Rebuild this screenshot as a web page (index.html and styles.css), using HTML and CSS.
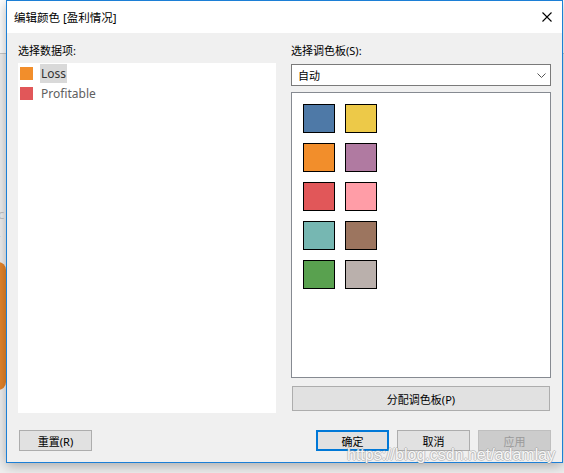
FILE: index.html
```html
<!DOCTYPE html>
<html>
	<head>
		<title>编辑颜色</title>
		<link rel="stylesheet" href="styles.css">
	</head>
	<body>
		<div class="desk">
			<div class="desk-top"></div>
			<div class="desk-text">rc<br>4</div>
			<div class="desk-shape"></div>

			<div class="dialog">
				<div class="titlebar">
					<span class="title">编辑颜色 [盈利情况]</span>
					<svg class="close" width="10" height="10" viewBox="0 0 10 10">
						<path d="M0.5 0.5 L9.5 9.5 M9.5 0.5 L0.5 9.5" stroke="#000" stroke-width="1.1" fill="none"/>
					</svg>
				</div>

				<div class="dialog-body">
					<div class="columns">
						<div class="col">
							<div class="label">选择数据项:</div>
							<ul class="items">
								<li class="item"><span class="chip orange"></span><span class="item-name selected">Loss</span></li>
								<li class="item"><span class="chip red"></span><span class="item-name">Profitable</span></li>
							</ul>
						</div>

						<div class="col">
							<div class="label">选择调色板(S):</div>
							<div class="select">
								<span>自动</span>
								<svg width="9" height="5" viewBox="0 0 9 5">
									<path d="M0.5 0.5 L4.5 4.5 L8.5 0.5" stroke="#555" stroke-width="1" fill="none"/>
								</svg>
							</div>
							<div class="palette">
								<span class="swatch blue"></span>
								<span class="swatch yellow"></span>
								<span class="swatch orange"></span>
								<span class="swatch purple"></span>
								<span class="swatch red"></span>
								<span class="swatch pink"></span>
								<span class="swatch teal"></span>
								<span class="swatch brown"></span>
								<span class="swatch green"></span>
								<span class="swatch grey"></span>
							</div>
							<button class="btn wide">分配调色板(P)</button>
						</div>
					</div>

					<div class="footer">
						<button class="btn reset">重置(R)</button>
						<div class="actions">
							<button class="btn default">确定</button>
							<button class="btn">取消</button>
							<button class="btn" disabled>应用</button>
						</div>
					</div>
				</div>
			</div>

			<div class="watermark">https://blog.csdn.net/adamlay</div>
		</div>
	</body>
</html>
```

FILE: styles.css
```css
body {
	margin: 0;
	background: #f0f0f0;
	font-family: "Noto Sans", "Noto Sans CJK SC", sans-serif;
}

.desk {
	position: relative;
	width: 564px;
	height: 473px;
	overflow: hidden;
}
.desk-top {
	height: 53px;
	background: #fff;
	border-bottom: 1px solid #c8c8c8;
}
.desk-text {
	position: absolute;
	left: -7px;
	top: 204px;
	font-size: 13px;
	line-height: 20px;
	color: #c4c4c4;
}
.desk-shape {
	position: absolute;
	left: -40px;
	top: 262px;
	width: 46px;
	height: 128px;
	background: #e5852a;
	border-radius: 8px;
}

/* the window itself */
.dialog {
	position: absolute;
	left: 6px;
	top: 0;
	width: 555px;
	height: 461px;
	border: 1px solid #1c7fd6;
	background: #f0f0f0;
	box-shadow: 0 3px 12px rgba(0, 0, 0, 0.3);
	display: flex;
	flex-direction: column;
}
.titlebar {
	height: 32px;
	background: #fff;
	display: flex;
	align-items: center;
	justify-content: space-between;
	padding: 0 10px 0 7px;
}
.title {
	font-size: 11.5px;
	color: #000;
}

.dialog-body {
	flex: 1;
	padding: 10px 11px 11px;
	display: flex;
	flex-direction: column;
}
.columns {
	display: grid;
	grid-template-columns: 258px 260px;
	column-gap: 15px;
}
.label {
	height: 20px;
	line-height: 16px;
	font-size: 11px;
	color: #000;
}

/* data items */
.items {
	list-style: none;
	margin: 0;
	padding: 0 0 0 2px;
	height: 350px;
	background: #fff;
	box-sizing: border-box;
}
.item {
	height: 20px;
	display: flex;
	align-items: center;
	gap: 7px;
	font-size: 12px;
}
.chip {
	width: 13px;
	height: 13px;
}
.item-name {
	line-height: 19px;
	padding: 0 1px;
	color: #606060;
}
.item-name.selected {
	background: #d9d9d9;
	color: #333;
}

/* palette picker */
.select {
	margin-top: 1px;
	height: 22px;
	box-sizing: border-box;
	border: 1px solid #7a7a7a;
	background: #fff;
	display: flex;
	align-items: center;
	justify-content: space-between;
	padding: 0 4px 0 6px;
	font-size: 11px;
}
.palette {
	margin-top: 6px;
	height: 286px;
	box-sizing: border-box;
	border: 1px solid #868a91;
	background: #fff;
	padding: 11px;
	display: grid;
	grid-template-columns: 32px 32px;
	grid-auto-rows: 29px;
	gap: 10px;
	align-content: start;
}
.swatch {
	box-sizing: border-box;
	border: 1px solid #000;
}

.blue { background: #4e79a7; }
.yellow { background: #edc948; }
.orange { background: #f28e2b; }
.purple { background: #b07aa1; }
.red { background: #e15759; }
.pink { background: #ff9da7; }
.teal { background: #76b7b2; }
.brown { background: #9c755f; }
.green { background: #59a14f; }
.grey { background: #bab0ac; }

/* buttons */
.btn {
	font-family: "Noto Sans", "Noto Sans CJK SC", sans-serif;
	font-size: 11px;
	color: #000;
	background: #e1e1e1;
	border: 1px solid #adadad;
	width: 73px;
	height: 21px;
	padding: 0;
	box-sizing: border-box;
}
.btn.wide {
	height: 25px;
	margin: 8px 1px 0;
	display: block;
	width: 258px;
}
.btn.default {
	border: 2px solid #0078d7;
}
.btn:disabled {
	background: #cccccc;
	border-color: #bfbfbf;
	color: #9a9a9a;
}

.footer {
	margin-top: 17px;
	display: flex;
	justify-content: space-between;
}
.btn.reset {
	margin-left: 1px;
}
.actions {
	display: flex;
	gap: 8px;
}

.watermark {
	position: absolute;
	left: 347px;
	top: 446px;
	font-family: "Liberation Sans", sans-serif;
	font-size: 16px;
	line-height: 18px;
	color: rgba(255, 255, 255, 0.92);
	text-shadow:
		1px 0 0 rgba(150, 150, 150, 0.45),
		-1px 0 0 rgba(150, 150, 150, 0.45),
		0 1px 0 rgba(150, 150, 150, 0.45),
		0 -1px 0 rgba(150, 150, 150, 0.45);
}
```
